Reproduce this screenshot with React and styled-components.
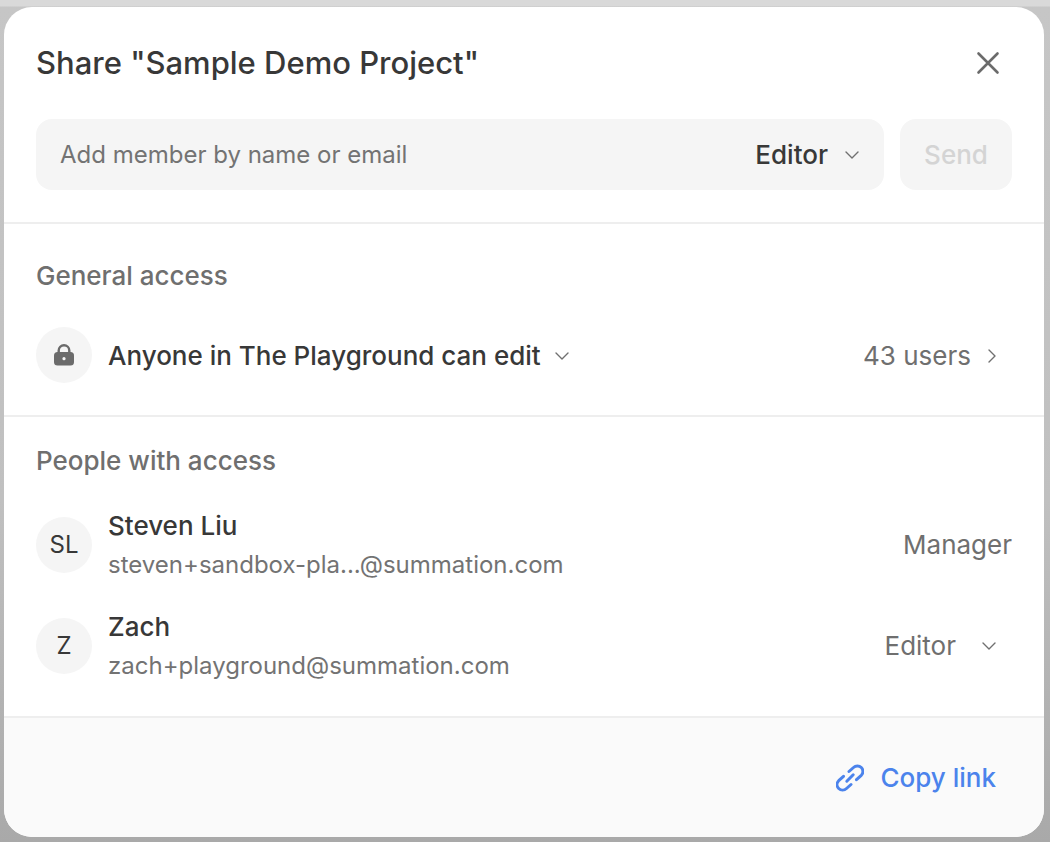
import React from 'react';
import styled, { createGlobalStyle } from 'styled-components';

const GlobalStyle = createGlobalStyle`
  html, body {
    margin: 0;
    padding: 0;
    height: 100%;
    overflow: hidden;
  }
  body {
    font-family: Inter, "Liberation Sans", sans-serif;
    background: #c2c2c2;
  }
`;

const Page = styled.div`
  width: 1050px;
  height: 842px;
  box-sizing: border-box;
  padding: 7px 6px 5px 4px;
  background: linear-gradient(#d9d9d9 0, #d9d9d9 6px, #c6c6c6 7px, #c0c0c0 500px, #a9a9a9 842px);
`;

const Modal = styled.div`
  height: 830px;
  border-radius: 28px;
  background: #fff;
  overflow: hidden;
  display: flex;
  flex-direction: column;
`;

const Section = styled.section`
  box-sizing: border-box;
  height: ${(p) => p.$height}px;
  padding: 0 32px;
  border-bottom: 2px solid #eeeeee;
`;

const Header = styled.div`
  height: 112px;
  display: flex;
  align-items: center;
  justify-content: space-between;
`;

const Title = styled.h2`
  margin: 0 0 2px;
  font-size: 31px;
  font-weight: 450;
  color: #383838;
`;

const CloseButton = styled.button`
  width: 48px;
  height: 48px;
  padding: 0;
  border: 0;
  background: none;
  display: flex;
  align-items: center;
  justify-content: center;
  color: #6b6b6b;
`;

const InviteRow = styled.div`
  display: flex;
  gap: 16px;
`;

const InviteField = styled.div`
  flex: 1;
  height: 71px;
  box-sizing: border-box;
  padding: 0 23px 0 24px;
  border-radius: 16px;
  background: #f5f5f5;
  display: flex;
  align-items: center;
  justify-content: space-between;
`;

const Placeholder = styled.span`
  font-size: 24px;
  color: #737373;
`;

const RoleSelect = styled.span`
  display: flex;
  align-items: center;
  gap: 15px;
  font-size: 26px;
  font-weight: 450;
  color: #383838;
`;

const SendButton = styled.button`
  width: 112px;
  height: 71px;
  padding: 0;
  border: 0;
  border-radius: 16px;
  background: #f5f5f5;
  font-family: inherit;
  font-size: 26px;
  font-weight: 450;
  color: #d4d4d4;
`;

const SectionLabel = styled.h3`
  margin: 0;
  padding-top: ${(p) => p.$top}px;
  padding-bottom: ${(p) => p.$bottom}px;
  font-size: 26px;
  line-height: 30px;
  font-weight: 450;
  color: #6f6f6f;
`;

const Row = styled.div`
  height: 101px;
  display: flex;
  align-items: center;
  gap: 16px;
`;

const Avatar = styled.div`
  flex: none;
  width: 56px;
  height: 56px;
  border-radius: 50%;
  background: #f5f5f5;
  color: #383838;
  font-size: 24px;
  display: flex;
  align-items: center;
  justify-content: center;
`;

const Access = styled.span`
  display: flex;
  align-items: center;
  gap: 12px;
  padding-top: 2px;
  font-size: 26px;
  font-weight: 450;
  color: #383838;
`;

const RightInfo = styled.span`
  margin-left: auto;
  display: flex;
  align-items: center;
  gap: ${(p) => p.$gap || 12}px;
  padding-top: ${(p) => p.$top || 0}px;
  padding-right: ${(p) => p.$pad || 0}px;
  font-size: 26px;
  color: #6f6f6f;
`;

const Person = styled.div`
  display: flex;
  flex-direction: column;
  gap: 5px;
  padding-top: 2px;
`;

const PersonName = styled.span`
  font-size: 26px;
  line-height: 34px;
  font-weight: 450;
  color: #383838;
`;

const PersonEmail = styled.span`
  font-size: 24px;
  line-height: 34px;
  color: #737373;
`;

const Footer = styled.footer`
  flex: 1;
  background: #fafafa;
  display: flex;
  align-items: center;
  justify-content: flex-end;
  padding: 0 48px 0 0;
`;

const CopyLink = styled.a`
  display: flex;
  align-items: center;
  gap: 16px;
  font-size: 26px;
  font-weight: 450;
  color: #4b83ec;
`;

const Chevron = ({ size = 18, dir = 'down' }) => (
  <svg width={size} height={size} viewBox="0 0 18 18" fill="none" stroke="#707070" strokeWidth="1.4" strokeLinecap="round" strokeLinejoin="round">
    <path d={dir === 'down' ? 'M3 6l6 6 6-6' : 'M6 3l6 6-6 6'} />
  </svg>
);

const CloseIcon = () => (
  <svg width="24" height="24" viewBox="0 0 24 24" fill="none" stroke="currentColor" strokeWidth="2.6" strokeLinecap="round">
    <path d="M2.5 2.5l19 19M21.5 2.5l-19 19" />
  </svg>
);

const LockIcon = () => (
  <svg width="20" height="22" viewBox="0 0 20 22">
    <path d="M4.7 9V6.5a5.3 5.3 0 0 1 10.6 0V9" fill="none" stroke="#6b6b6b" strokeWidth="2.4" />
    <rect x="0" y="8" width="20" height="13.5" rx="3.5" fill="#6b6b6b" />
    <circle cx="10" cy="14.7" r="1.6" fill="#f5f5f5" />
  </svg>
);

const LinkIcon = () => (
  <svg width="28" height="28" viewBox="0 0 28 28" fill="none" stroke="#4b83ec" strokeWidth="3" strokeLinecap="round" strokeLinejoin="round">
    <path d="M13 7.5l4.5-4a5.5 5.5 0 0 1 7.8 7.8l-4.8 4.4" />
    <path d="M15 20.5l-4.5 4a5.5 5.5 0 0 1-7.8-7.8l4.8-4.4" />
    <path d="M10.8 17.2l6.4-6.4" />
  </svg>
);

const App = () => (
  <Page>
    <GlobalStyle />
    <Modal>
      <Section $height={217}>
        <Header>
          <Title>Share "Sample Demo Project"</Title>
          <CloseButton aria-label="Close">
            <CloseIcon />
          </CloseButton>
        </Header>
        <InviteRow>
          <InviteField>
            <Placeholder>Add member by name or email</Placeholder>
            <RoleSelect>
              Editor
              <Chevron />
            </RoleSelect>
          </InviteField>
          <SendButton>Send</SendButton>
        </InviteRow>
      </Section>
      <Section $height={193}>
        <SectionLabel $top={37} $bottom={13}>General access</SectionLabel>
        <Row>
          <Avatar>
            <LockIcon />
          </Avatar>
          <Access>
            Anyone in The Playground can edit
            <Chevron />
          </Access>
          <RightInfo $top={2} $pad={11}>
            43 users
            <Chevron dir="right" />
          </RightInfo>
        </Row>
      </Section>
      <Section $height={301}>
        <SectionLabel $top={29} $bottom={18}>People with access</SectionLabel>
        <Row>
          <Avatar>SL</Avatar>
          <Person>
            <PersonName>Steven Liu</PersonName>
            <PersonEmail>steven+sandbox-pla...@summation.com</PersonEmail>
          </Person>
          <RightInfo>Manager</RightInfo>
        </Row>
        <Row>
          <Avatar>Z</Avatar>
          <Person>
            <PersonName>Zach</PersonName>
            <PersonEmail>zach+playground@summation.com</PersonEmail>
          </Person>
          <RightInfo $gap={24} $pad={14}>
            Editor
            <Chevron />
          </RightInfo>
        </Row>
      </Section>
      <Footer>
        <CopyLink>
          <LinkIcon />
          Copy link
        </CopyLink>
      </Footer>
    </Modal>
  </Page>
);

export default App;
